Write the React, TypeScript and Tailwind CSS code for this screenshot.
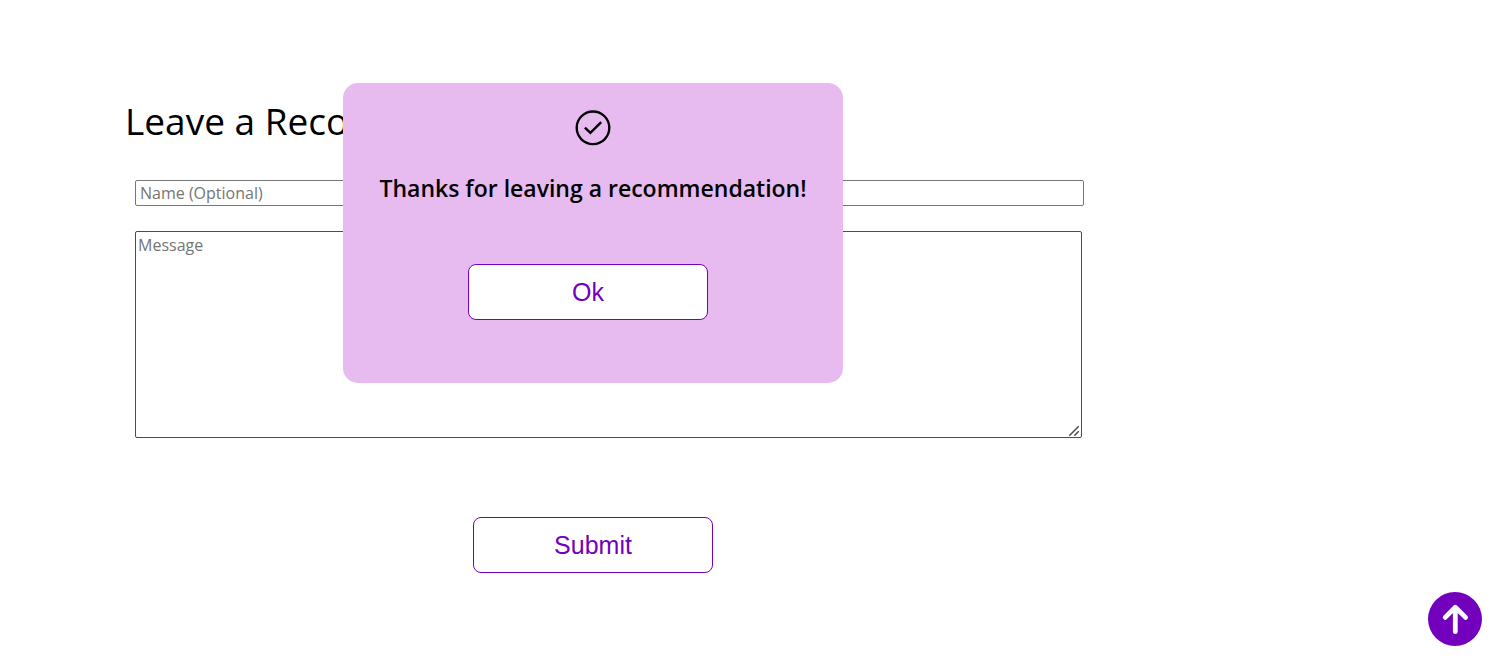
import { useState } from "react";

const buttonClass =
  "h-14 w-60 rounded-lg border border-[#7300bd] bg-white pt-[2px] font-['Liberation_Sans',sans-serif] text-[25px] text-[#7300bd]";

function Confirmation({ onClose }: { onClose: () => void }) {
  return (
    <div
      role="dialog"
      aria-labelledby="thanks"
      className="absolute top-[83px] left-1/2 flex h-[300px] w-[500px] -translate-x-1/2 flex-col items-center rounded-[15px] bg-[#e8bbf0] pt-[27px]"
    >
      <svg
        viewBox="0 0 36 36"
        className="size-9"
        fill="none"
        stroke="black"
        aria-hidden="true"
      >
        <circle cx="18" cy="17.8" r="16.3" strokeWidth="2.4" />
        <path d="M9.9 17.6 L15.4 22.8 L26.2 12.2" strokeWidth="2.4" />
      </svg>
      <h2
        id="thanks"
        className="mt-[26px] text-[23px] leading-8 font-semibold whitespace-nowrap"
      >
        Thanks for leaving a recommendation!
      </h2>
      <button
        type="button"
        onClick={onClose}
        className={`mt-[60px] mr-[10px] ${buttonClass}`}
      >
        Ok
      </button>
    </div>
  );
}

export default function App() {
  const [open, setOpen] = useState(true);

  return (
    <div className="min-h-screen bg-white font-['Open_Sans',sans-serif] text-black">
      <main className="pr-[422px] pl-[102px]">
        <section className="relative pt-24">
          <h1 className="pl-[23px] text-[37px] leading-[50px] whitespace-nowrap">
            Leave a Recommendation
          </h1>
          <form
            className="mt-[34px] flex flex-col"
            onSubmit={(event) => {
              event.preventDefault();
              setOpen(true);
            }}
          >
            <div className="flex flex-col gap-[25px] pl-[33px]">
              <input
                type="text"
                aria-label="Name (Optional)"
                placeholder="Name (Optional)"
                className="h-[26px] w-full rounded-xs border border-[#767676] bg-white px-1 text-base placeholder:text-[#757575]"
              />
              <div className="relative mr-[2px] flex">
                <textarea
                  aria-label="Message"
                  placeholder="Message"
                  className="h-[207px] w-full resize-y rounded-xs border border-[#4c4c4c] bg-white px-[2px] py-[2px] text-base leading-[22px] placeholder:text-[#757575] [&::-webkit-resizer]:bg-transparent"
                />
                <svg
                  viewBox="0 0 10 10"
                  className="pointer-events-none absolute right-[3px] bottom-[2px] size-[10px]"
                  fill="none"
                  stroke="#4c4c4c"
                  strokeWidth="1.5"
                  aria-hidden="true"
                >
                  <path d="M0.3 9.7L9.7 0.3M5.3 9.7L9.7 5.3" />
                </svg>
              </div>
            </div>
            <button type="submit" className={`mt-[79px] self-center ${buttonClass}`}>
              Submit
            </button>
          </form>
          {open && <Confirmation onClose={() => setOpen(false)} />}
        </section>
      </main>
      <button
        type="button"
        aria-label="Back to top"
        onClick={() => window.scrollTo({ top: 0, behavior: "smooth" })}
        className="fixed right-6 bottom-5 size-[54px] rounded-full bg-[#7300bd]"
      >
        <svg
          viewBox="0 0 54 54"
          fill="none"
          stroke="white"
          strokeWidth="4.8"
          strokeLinecap="round"
          strokeLinejoin="round"
          aria-hidden="true"
        >
          <path d="M27.3 39.7V15.5M17.2 25.4L27.3 15.2L37.6 25.4" />
        </svg>
      </button>
    </div>
  );
}
